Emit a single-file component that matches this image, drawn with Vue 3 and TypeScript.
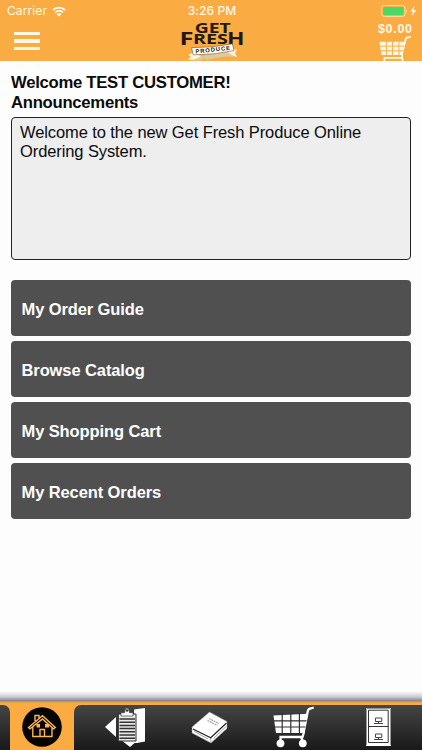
<script setup lang="ts">
interface MenuItem {
  id: string
  label: string
}

const menu: MenuItem[] = [
  { id: 'guide', label: 'My Order Guide' },
  { id: 'catalog', label: 'Browse Catalog' },
  { id: 'cart', label: 'My Shopping Cart' },
  { id: 'recent', label: 'My Recent Orders' },
]

const customer = 'TEST CUSTOMER'
const total = '$0.00'
</script>

<template>
  <div class="screen">
    <header class="header">
      <div class="status">
        <div class="carrier">
          <span>Carrier</span>
          <svg class="wifi" width="14" height="11" viewBox="0 0 14 11">
            <path d="M0.8 4.1C4.4 0.7 9.6 0.7 13.2 4.1M3 6.4C5.3 4.3 8.7 4.3 11 6.4" fill="none" stroke="#fff" stroke-width="1.7" />
            <path d="M7 10.6L4.6 8.2C5.9 7 8.1 7 9.4 8.2Z" fill="#fff" />
          </svg>
        </div>
        <span class="clock">3:26 PM</span>
        <svg class="battery" width="36" height="12" viewBox="0 0 36 12">
          <rect x="0.6" y="0.6" width="23.4" height="10.8" rx="2.6" fill="none" stroke="#fde0a4" />
          <rect x="2.1" y="2.1" width="20.4" height="7.8" rx="1.3" fill="#4bd964" />
          <path d="M25.3 4.2Q27 6 25.3 7.8Z" fill="#fde0a4" />
          <path d="M33.6 1L29.4 6.6H32L30.6 11L35.4 5.2H32.6Z" fill="#fff" />
        </svg>
      </div>
      <div class="bar">
        <button class="burger" aria-label="Menu"><i></i><i></i><i></i></button>
        <svg class="logo" width="68" height="39" viewBox="0 0 68 39">
          <g class="word" fill="#1f1a0f">
            <text x="16.8" y="11" font-size="15" textLength="36" lengthAdjust="spacingAndGlyphs">GET</text>
            <text x="1.4" y="23.3" font-size="17" textLength="14" lengthAdjust="spacingAndGlyphs">F</text>
            <text x="15" y="21.8" font-size="14" textLength="35" lengthAdjust="spacingAndGlyphs">RES</text>
            <text x="49" y="23.3" font-size="17" textLength="17.5" lengthAdjust="spacingAndGlyphs">H</text>
          </g>
          <path d="M15 32L24 34L26 37Q18 40 10 37L13 35ZM50 29L58 35Q46 33 28 38L24 34Z" fill="#dccaa6" />
          <path d="M14 31L10.5 33L13 35L10 37.5Q18 38.5 23 34ZM53 27.5H59L57 31L59 35Q54 34 50 30Z" fill="#fff3da" />
          <path d="M13.6 25.6Q34 26 54.4 21.8L56 28.6Q36 33 15.2 32.8Z" fill="#fffdf6" stroke="#57452a" stroke-width="0.5" />
          <text class="produce" x="17.8" y="31.6" font-size="5.8" textLength="34.5" transform="rotate(-6.5 17.8 31.6)" fill="#24180a">PRODUCE</text>
        </svg>
        <div class="total">
          <span>{{ total }}</span>
          <svg width="33" height="26" viewBox="0 0 42 34">
            <g fill="#fff8e8">
              <path d="M0 7.5H34L30.5 25H2.5Z" />
              <path d="M29 25L34.5 3.7Q35 2.2 36.5 2L41 1" fill="none" stroke="#fff8e8" stroke-width="2.4" />
              <path d="M29.5 24L29.8 28.5H6.5V33M29.5 28.5L30.5 33" fill="none" stroke="#fff8e8" stroke-width="2.4" />
            </g>
            <path d="M9 6V25.5M17 6V25.5M25.5 6V25.5M0 13.2H33M0 19.4H32" stroke="#faac43" stroke-width="1.3" />
          </svg>
        </div>
      </div>
    </header>

    <main class="content">
      <h1>Welcome {{ customer }}!</h1>
      <h2>Announcements</h2>
      <div class="notice">Welcome to the new Get Fresh Produce Online Ordering System.</div>
      <nav class="menu">
        <button v-for="item in menu" :key="item.id" class="item">{{ item.label }}</button>
      </nav>
    </main>

    <div class="shade"></div>
    <footer class="tabs">
      <div class="edge"></div>
      <div class="home">
        <svg width="40" height="40" viewBox="0 0 40 40">
          <circle cx="20" cy="20" r="19.8" fill="#050403" />
          <g fill="none" stroke="#f9b45a" stroke-width="1.4">
            <path d="M13 14V8.5H17V11M6.5 20.5L20.5 8.8L33.3 20.5L31.5 21.8L20.5 12L8 21.8ZM10.8 20V29.5H30V20M18 29V22.5H22.5V29" />
          </g>
          <path d="M14.5 17H18V20.5H14.5ZM23 17H27V20.5H23Z" fill="#f9b45a" />
        </svg>
      </div>
      <div class="others">
        <div class="tab">
          <svg class="guide" width="41" height="41" viewBox="0 0 41 41">
            <path d="M0 20L11 10V30Z" fill="#fff" />
            <path d="M29 2.5L40 1V34.5L32 36H29ZM16 33H33L25 40Z" fill="#fff" />
            <path d="M13.3 7H31V34H13.3Z" fill="#e9e9e9" stroke="#2c2c2c" />
            <path d="M14.5 12H30M14.5 15.2H30M14.5 18.4H30M14.5 21.6H30M14.5 24.8H30M14.5 28H30M14.5 31.2H30" stroke="#333" stroke-width="1.5" />
            <path d="M16 9V5.7H19.6Q20 1 22 1Q24 1 24.5 5.7H28V9Z" fill="#fff" stroke="#444" stroke-width="0.7" />
            <circle cx="22" cy="3.5" r="1.2" fill="#333" />
          </svg>
        </div>
        <div class="tab">
          <svg class="book" width="38" height="34" viewBox="0 0 38 34">
            <path d="M18.5 1L36 10.5V17.5L20 32L1 22V16Z" fill="#fff" stroke="#888" stroke-width="0.7" stroke-dasharray="2 1" />
            <path d="M2 18L19.7 26.8L35.5 12" fill="none" stroke="#252525" stroke-width="1.2" />
            <path d="M19.8 26.8V31M3 20.2L17 28M22.5 27.5L35 15.5" fill="none" stroke="#777" stroke-width="0.7" />
            <path d="M18 7.5L28 12.5M16.5 9.5L26.5 14.5" stroke="#aaa" stroke-width="1.3" stroke-dasharray="2 0.6" />
          </svg>
        </div>
        <div class="tab">
          <svg class="cart" width="42" height="42" viewBox="0 0 42 42">
            <path d="M0.5 9.5L35 7.7L31.3 27H3Z" fill="#fff" />
            <path d="M30.5 27L34.8 5Q35.3 3.2 37 2.7L40.8 1.5M31 26L29.5 31H7.5V36M28 31L30 36" fill="none" stroke="#fff" stroke-width="2.3" />
            <path d="M9.2 7V28M17.8 7V28M26.4 7V28M0 14.8H33.5M0 21H32.5" stroke="#303030" stroke-width="1.2" />
            <circle cx="7.5" cy="37.3" r="3.9" fill="#fff" />
            <circle cx="29.8" cy="37.3" r="3.9" fill="#fff" />
          </svg>
        </div>
        <div class="tab">
          <svg class="cabinet" width="25" height="38" viewBox="0 0 25 38">
            <rect width="25" height="38" fill="#fff" />
            <path d="M0.5 37V0.5H24.5V37" fill="none" stroke="#999" />
            <path d="M2.5 2.2H22.2V34.5H2.5ZM2.5 18.5H22.2" fill="none" stroke="#333" />
            <path d="M9.5 10H15.8V13.5H9.5ZM8 15.5H17M12.5 13.5V16M9.5 26H15.8V29.5H9.5ZM8 31.5H17M12.5 29.5V32" fill="none" stroke="#444" />
          </svg>
        </div>
      </div>
    </footer>
  </div>
</template>

<style>
body { margin: 0; background: #fdfdfd; }
</style>

<style scoped>
.screen {
  display: flex;
  flex-direction: column;
  width: 422px;
  height: 750px;
  overflow: hidden;
  background: #fdfdfd;
  color: #0b0b0b;
  font-family: "Liberation Sans", Arial, sans-serif;
}
button { border: 0; padding: 0; font: inherit; text-align: left; }
svg { display: block; flex: none; }
.header { height: 61px; flex: none; overflow: hidden; background: #faac43; }
.status {
  display: grid;
  grid-template-columns: 1fr auto 1fr;
  align-items: center;
  height: 22px;
  padding: 0 5px 0 7px;
  color: #fff8e8;
  font: 12px/22px Inter, sans-serif;
}
.carrier { display: flex; align-items: center; gap: 5px; letter-spacing: 0.1px; }
.clock { font-weight: 500; letter-spacing: 0.1px; }
.battery { justify-self: end; }
.bar {
  display: grid;
  grid-template-columns: 1fr 68px 1fr;
  height: 39px;
  padding: 0 10px 0 14px;
}
.burger { display: flex; flex-direction: column; gap: 4px; width: 26px; padding-top: 10px; background: none; }
.burger i { height: 3.4px; background: #fff8e3; }
.logo { overflow: visible; margin-left: -1px; }
.word { font-family: "Open Sans", sans-serif; font-weight: 700; }
.produce { font-family: "Liberation Sans", sans-serif; font-weight: 700; }
.total { display: flex; flex-direction: column; align-items: flex-end; color: #fff8e8; font: 700 12.5px/14px "Liberation Sans", sans-serif; letter-spacing: 0.7px; }
.total span { margin-right: -0.7px; }
.content { flex: 1; display: flex; flex-direction: column; padding: 12px 11px 0; }
h1, h2 { margin: 0; font-size: 16.7px; line-height: 20px; font-weight: 700; letter-spacing: -0.28px; }
.notice {
  box-sizing: border-box;
  height: 143px;
  margin-top: 4px;
  padding: 5px 8px;
  border: 1px solid #222;
  border-radius: 4px;
  background: #eee;
  font-size: 16.5px;
  line-height: 19px;
  letter-spacing: -0.1px;
}
.menu { display: flex; flex-direction: column; gap: 5px; margin-top: 20px; }
.item { height: 56px; padding: 2px 10.5px 0; border-radius: 4px; background: #505050; color: #fff; font-size: 16.5px; font-weight: 700; letter-spacing: -0.1px; }
.shade { flex: none; height: 10px; background: linear-gradient(#fdfdfd, #d0cfd3 55%, #85838a); }
.tabs { display: grid; grid-template-columns: 10px 64px 1fr; flex: none; box-sizing: border-box; height: 49px; padding-top: 4px; background: linear-gradient(#b98a55, #faac43 2px); }
.edge, .others { background: linear-gradient(#454545, #191919); }
.edge { border-radius: 0 7px 0 0; }
.home { display: flex; justify-content: center; padding-top: 2px; }
.others { display: grid; grid-template-columns: repeat(4, 84.4px); border-radius: 7px 0 0 0; overflow: hidden; }
.tab { display: flex; justify-content: center; align-items: flex-start; }
.guide { margin: 2px 0 0 18px; }
.book { margin: 6px 0 0 18px; }
.cart { margin: 1px 0 0 19px; }
.cabinet { margin: 3px 0 0 19px; }
</style>
